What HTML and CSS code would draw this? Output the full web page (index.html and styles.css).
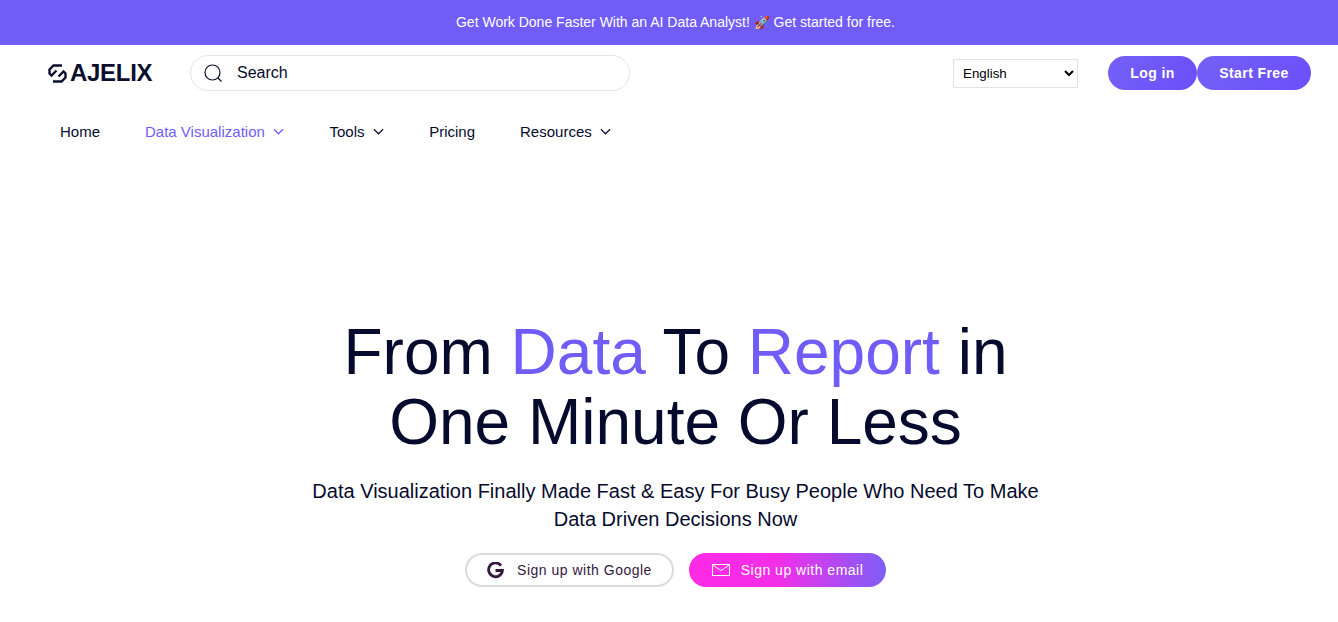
FILE: index.html
```html
<!DOCTYPE html>
<html lang="en">
<head>
  <meta charset="UTF-8" />
  <meta name="viewport" content="width=device-width, initial-scale=1.0"/>
  <title>Ajelix</title>
  <link rel="stylesheet" href="styles.css">
</head>
<body>
  <div class="promo">Get Work Done Faster With an AI Data Analyst! <span class="rocket">🚀</span> Get started for free.</div>

  <header class="topbar">
    <a class="logo" href="#">
      <svg class="logo-mark" width="19" height="19" viewBox="0 0 19 19" fill="none" stroke="#0b0f2e" stroke-width="2.4">
        <path d="M14 1.5 L5.5 1.5 L1.5 5.5 L1.5 9.5 L3.5 11.5 L8.5 6.5"/>
        <path d="M5 17.5 L13.5 17.5 L17.5 13.5 L17.5 9.5 L15.5 7.5 L10.5 12.5"/>
      </svg>
      <span class="logo-text">AJELIX</span>
    </a>
    <div class="search">
      <svg width="20" height="20" viewBox="0 0 20 20" fill="none" stroke="#0b0f2e" stroke-width="1.2">
        <circle cx="9.5" cy="9.5" r="7.5"/>
        <path d="M15 15 L18.5 18.5"/>
      </svg>
      <span class="search-text">Search</span>
    </div>
    <select class="lang">
      <option>English</option>
    </select>
    <div class="auth">
      <a class="btn-auth btn-login" href="#">Log in</a>
      <a class="btn-auth btn-start" href="#">Start Free</a>
    </div>
  </header>

  <nav class="menu">
    <a href="#">Home</a>
    <a href="#" class="active">Data Visualization <svg class="caret" width="11" height="7" viewBox="0 0 12 7" fill="none" stroke="#705cf7" stroke-width="1.3"><path d="M1 1 L6 6 L11 1"/></svg></a>
    <a href="#">Tools <svg class="caret" width="11" height="7" viewBox="0 0 12 7" fill="none" stroke="#0b0f2e" stroke-width="1.3"><path d="M1 1 L6 6 L11 1"/></svg></a>
    <a href="#">Pricing</a>
    <a href="#">Resources <svg class="caret" width="11" height="7" viewBox="0 0 12 7" fill="none" stroke="#0b0f2e" stroke-width="1.3"><path d="M1 1 L6 6 L11 1"/></svg></a>
  </nav>

  <main class="hero">
    <h1>From <span>Data</span> To <span>Report</span> in<br>One Minute Or Less</h1>
    <p>Data Visualization Finally Made Fast &amp; Easy For Busy People Who Need To Make<br>Data Driven Decisions Now</p>
    <div class="cta">
      <a class="btn-google" href="#">
        <svg width="17" height="17" viewBox="0 0 17 17" fill="none" stroke="#35183f" stroke-width="2.8">
          <path d="M14 3.6 A6.9 6.9 0 1 0 15.4 8.5 L8.5 8.5"/>
        </svg>
        Sign up with Google
      </a>
      <a class="btn-email" href="#">
        <svg width="18" height="12" viewBox="0 0 18 12" fill="none" stroke="#fff" stroke-width="1">
          <rect x="0.5" y="0.5" width="17" height="11"/>
          <path d="M0.5 1 L9 6.5 L17.5 1"/>
        </svg>
        Sign up with email
      </a>
    </div>
    <div class="preview"></div>
  </main>
</body>
</html>
```

FILE: styles.css
```css
* {
  box-sizing: border-box;
}

html, body {
  height: 622px;
  overflow: hidden;
}

body {
  margin: 0;
  background-color: #fff;
  color: #060b2d;
  font-family: "Liberation Sans", Arial, sans-serif;
}

a {
  text-decoration: none;
  color: inherit;
}

.promo {
  height: 45px;
  padding-left: 13px;
  line-height: 44px;
  background-color: #705cf7;
  color: #fff;
  font-size: 14px;
  text-align: center;
}

.rocket {
  font-size: 13px;
}

.topbar {
  display: flex;
  align-items: center;
  height: 56px;
  padding: 0 27px 0 48px;
}

.logo {
  display: flex;
  align-items: center;
  gap: 3px;
  width: 142px;
}

.logo-text {
  font-size: 24px;
  font-weight: 700;
  letter-spacing: -0.3px;
  color: #0b0f2e;
}

.search {
  display: flex;
  align-items: center;
  gap: 14px;
  width: 440px;
  height: 36px;
  padding-left: 12px;
  border: 1px solid #e4e4e7;
  border-radius: 18px;
  font-size: 16px;
}

.lang {
  width: 125px;
  height: 29px;
  margin-left: 323px;
  padding-left: 5px;
  background-color: #fff;
  border: 1px solid #e2e2e2;
  border-radius: 0;
  color: #000;
  font-family: "Liberation Sans", Arial, sans-serif;
  font-size: 13.33px;
}

.auth {
  display: flex;
  margin-left: 30px;
}

.btn-auth {
  height: 34px;
  line-height: 34px;
  border-radius: 17px;
  background: linear-gradient(120deg, #7460f5, #6c4ffb);
  color: #fff;
  font-size: 14px;
  font-weight: 700;
  letter-spacing: 0.4px;
  text-align: center;
}

.btn-login {
  width: 89px;
}

.btn-start {
  width: 114px;
}

.menu {
  display: flex;
  gap: 45px;
  padding: 0 60px;
  margin-top: 21px;
  font-size: 15px;
  line-height: 20px;
}

.menu .active {
  color: #705cf7;
}

.caret {
  margin-left: 4.5px;
  vertical-align: 2px;
}

.hero {
  margin-top: 175px;
  padding-left: 13px;
  text-align: center;
}

.hero h1 {
  margin: 0;
  font-size: 64px;
  font-weight: 400;
  line-height: 70px;
}

.hero h1 span {
  color: #705cf7;
}

.hero p {
  margin: 20px 0 0;
  font-size: 20px;
  line-height: 28px;
}

.cta {
  display: flex;
  justify-content: center;
  gap: 15px;
  margin-top: 20px;
  font-size: 14px;
  letter-spacing: 0.5px;
}

.btn-google, .btn-email {
  display: flex;
  align-items: center;
  justify-content: center;
  height: 34px;
  border-radius: 17px;
}

.btn-google {
  gap: 13px;
  width: 209px;
  border: 2px solid #dbdbdb;
  color: #35183f;
}

.btn-email {
  gap: 11px;
  width: 197px;
  background: linear-gradient(90deg, #ff2ae6 0%, #f22ee8 45%, #7d5ff7 100%);
  color: #fff;
}

.preview {
  height: 2px;
  margin: 33px 168px 0 180px;
  box-shadow: 0 0 12px rgba(0, 0, 0, 0.02);
}
```
